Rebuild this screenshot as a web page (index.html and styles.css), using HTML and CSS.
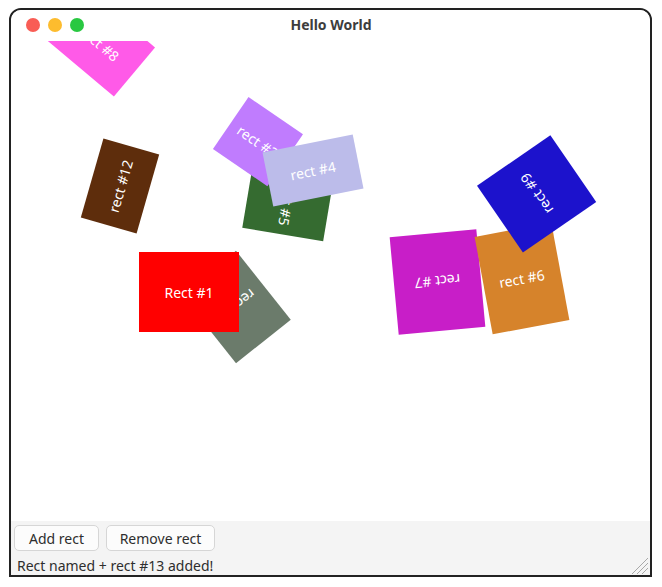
FILE: index.html
```html
<!DOCTYPE html>
<html>
<head>
<meta charset="utf-8">
<link rel="stylesheet" href="styles.css">
</head>
<body>
<div class="window">
  <div class="titlebar">
    <div class="lights">
      <span class="light red"></span>
      <span class="light yellow"></span>
      <span class="light green"></span>
    </div>
    <div class="title">Hello World</div>
  </div>
  <div class="canvas">
    <div class="rect" style="left:44px;top:-30.5px;width:90px;height:64px;background:#ff5ae8;transform:rotate(40deg)">rect #8</div>
    <div class="rect" style="left:67.75px;top:115.5px;width:82px;height:58px;background:#5e2d0c;transform:rotate(-74deg)">rect #12</div>
    <div class="rect" style="left:189.5px;top:222px;width:70px;height:88px;background:#6b7b6b;transform:rotate(141.5deg)">rect #2</div>
    <div class="rect" style="left:128px;top:211px;width:100px;height:80px;background:#ff0000">Rect #1</div>
    <div class="rect" style="left:244.8px;top:120.9px;width:64px;height:82px;background:#356b30;transform:rotate(99.5deg)">rect #5</div>
    <div class="rect" style="left:214.25px;top:69px;width:65.5px;height:63px;background:#c07cfe;transform:rotate(34.4deg)">rect #3</div>
    <div class="rect" style="left:255.75px;top:101.5px;width:92px;height:55px;background:#bcbcea;transform:rotate(-11.3deg)">rect #4</div>
    <div class="rect" style="left:383.25px;top:192px;width:87px;height:98px;background:#c81ec8;transform:rotate(174.7deg)">rect #7</div>
    <div class="rect" style="left:472.35px;top:187.7px;width:77.5px;height:99px;background:#d6832b;transform:rotate(-10.5deg)">rect #6</div>
    <div class="rect" style="left:485.1px;top:108.1px;width:81.3px;height:89.3px;background:#1c12cc;transform:rotate(-124.5deg)">rect #9</div>
  </div>
  <div class="panel">
    <div class="buttons">
      <button class="btn btn-add">Add rect</button>
      <button class="btn btn-remove">Remove rect</button>
    </div>
    <div class="status">Rect named + rect #13 added!</div>
    <svg class="grip" width="20" height="20" viewBox="0 0 20 20">
      <line x1="19" y1="3" x2="3" y2="19" stroke="#a8a8a8" stroke-width="1"/>
      <line x1="19" y1="8" x2="8" y2="19" stroke="#a8a8a8" stroke-width="1"/>
      <line x1="19" y1="13" x2="13" y2="19" stroke="#a8a8a8" stroke-width="1"/>
    </svg>
  </div>
</div>
</body>
</html>
```
FILE: styles.css
```css
html, body {
  margin: 0;
  padding: 0;
  background: #ffffff;
}
body {
  padding: 8px 0 0 9px;
  font-family: "Noto Sans", "Open Sans", sans-serif;
}
.window {
  width: 639px;
  height: 565px;
  border: 2px solid #222222;
  border-radius: 12px 12px 0 0;
  display: flex;
  flex-direction: column;
  overflow: hidden;
  background: #ffffff;
}
.titlebar {
  height: 31px;
  flex: none;
  position: relative;
  display: flex;
  align-items: center;
  justify-content: center;
  background: #ffffff;
}
.lights {
  position: absolute;
  left: 15px;
  top: 8px;
  display: flex;
  gap: 8px;
}
.light {
  width: 14px;
  height: 14px;
  border-radius: 50%;
  display: block;
}
.red { background: #f95d55; }
.yellow { background: #fdbc2e; }
.green { background: #29c841; }
.title {
  font-family: "Noto Sans", sans-serif;
  font-weight: bold;
  font-size: 14px;
  color: #3d3d3d;
  margin: 0 0 3px 1px;
}
.canvas {
  flex: 1;
  position: relative;
  overflow: hidden;
  background: #ffffff;
}
.rect {
  position: absolute;
  display: flex;
  align-items: center;
  justify-content: center;
  color: #ffffff;
  font-family: "Noto Sans", sans-serif;
  font-size: 14px;
  white-space: nowrap;
  transform-origin: center center;
}
.panel {
  height: 54px;
  flex: none;
  background: #f4f4f4;
  position: relative;
  display: flex;
  flex-direction: column;
  padding: 4px 0 0 3px;
  box-sizing: border-box;
}
.buttons {
  display: flex;
  gap: 7px;
}
.btn {
  height: 26px;
  border: 1px solid #d6d6d6;
  border-radius: 5px;
  background: #fcfcfc;
  font-family: "Noto Sans", sans-serif;
  font-size: 14px;
  color: #2e2e2e;
  padding: 0;
  margin: 0;
}
.btn-add { width: 85px; }
.btn-remove { width: 109px; }
.status {
  font-size: 14px;
  color: #2e2e2e;
  margin: 6px 0 0 3px;
  line-height: 18px;
}
.grip {
  position: absolute;
  right: 1px;
  bottom: 0;
}
```
